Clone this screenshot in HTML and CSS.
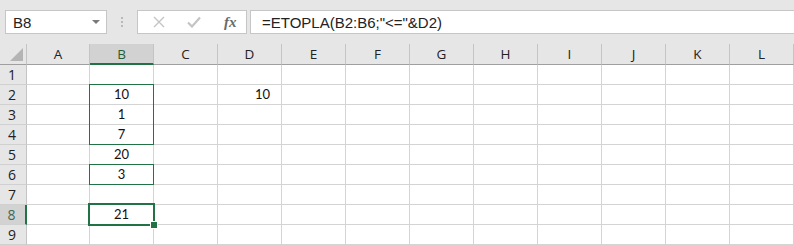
FILE: index.html
```html
<!DOCTYPE html>
<html lang="en">
<head>
  <meta charset="UTF-8" />
  <title>ETOPLA</title>
  <link rel="stylesheet" href="styles.css">
</head>
<body>

  <div class="toolbar">
    <div class="namebox">
      <span>B8</span>
      <span class="caret"></span>
    </div>
    <div class="grip"><i></i><i></i><i></i></div>
    <div class="fx-buttons">
      <svg width="12" height="12" viewBox="0 0 12 12"><path d="M1 1 L11 11 M11 1 L1 11" stroke="#c4c4c4" stroke-width="1.4" fill="none"/></svg>
      <svg width="14" height="12" viewBox="0 0 14 12"><path d="M1 6.5 L5 10.5 L13 1.5" stroke="#c4c4c4" stroke-width="2.2" fill="none"/></svg>
      <span class="fx">fx</span>
    </div>
    <div class="formula">=ETOPLA(B2:B6;"&lt;="&amp;D2)</div>
  </div>

  <div class="sheet">
    <!-- header row -->
    <div class="hd corner"><span class="tri"></span></div>
    <div class="hd">A</div><div class="hd active">B</div><div class="hd">C</div><div class="hd">D</div>
    <div class="hd">E</div><div class="hd">F</div><div class="hd">G</div><div class="hd">H</div>
    <div class="hd">I</div><div class="hd">J</div><div class="hd">K</div><div class="hd">L</div>

    <div class="rh">1</div>
    <div class="c"></div><div class="c"></div><div class="c"></div><div class="c"></div><div class="c"></div><div class="c"></div>
    <div class="c"></div><div class="c"></div><div class="c"></div><div class="c"></div><div class="c"></div><div class="c"></div>

    <div class="rh">2</div>
    <div class="c"></div><div class="c mid">10<div class="range tall"></div></div><div class="c"></div><div class="c right">10</div><div class="c"></div><div class="c"></div>
    <div class="c"></div><div class="c"></div><div class="c"></div><div class="c"></div><div class="c"></div><div class="c"></div>

    <div class="rh">3</div>
    <div class="c"></div><div class="c mid">1</div><div class="c"></div><div class="c"></div><div class="c"></div><div class="c"></div>
    <div class="c"></div><div class="c"></div><div class="c"></div><div class="c"></div><div class="c"></div><div class="c"></div>

    <div class="rh">4</div>
    <div class="c"></div><div class="c mid">7</div><div class="c"></div><div class="c"></div><div class="c"></div><div class="c"></div>
    <div class="c"></div><div class="c"></div><div class="c"></div><div class="c"></div><div class="c"></div><div class="c"></div>

    <div class="rh">5</div>
    <div class="c"></div><div class="c mid">20</div><div class="c"></div><div class="c"></div><div class="c"></div><div class="c"></div>
    <div class="c"></div><div class="c"></div><div class="c"></div><div class="c"></div><div class="c"></div><div class="c"></div>

    <div class="rh">6</div>
    <div class="c"></div><div class="c mid">3<div class="range"></div></div><div class="c"></div><div class="c"></div><div class="c"></div><div class="c"></div>
    <div class="c"></div><div class="c"></div><div class="c"></div><div class="c"></div><div class="c"></div><div class="c"></div>

    <div class="rh">7</div>
    <div class="c"></div><div class="c"></div><div class="c"></div><div class="c"></div><div class="c"></div><div class="c"></div>
    <div class="c"></div><div class="c"></div><div class="c"></div><div class="c"></div><div class="c"></div><div class="c"></div>

    <div class="rh active">8</div>
    <div class="c"></div><div class="c mid">21<div class="cursor"><span class="handle"></span></div></div><div class="c"></div><div class="c"></div><div class="c"></div><div class="c"></div>
    <div class="c"></div><div class="c"></div><div class="c"></div><div class="c"></div><div class="c"></div><div class="c"></div>

    <div class="rh">9</div>
    <div class="c"></div><div class="c"></div><div class="c"></div><div class="c"></div><div class="c"></div><div class="c"></div>
    <div class="c"></div><div class="c"></div><div class="c"></div><div class="c"></div><div class="c"></div><div class="c"></div>
  </div>

</body>
</html>
```

FILE: styles.css
```css
* {
  box-sizing: border-box;
}

body {
  margin: 0;
  background: #e6e6e6;
  font-family: "Liberation Sans", Arial, sans-serif;
  overflow: hidden;
}

/* formula bar */
.toolbar {
  height: 44px;
  display: flex;
  align-items: flex-start;
  padding: 10px 0 0 5px;
}

.namebox {
  width: 102px;
  height: 24px;
  background: #fff;
  border: 1px solid #c6c6c6;
  display: flex;
  align-items: center;
  justify-content: space-between;
  padding: 0 6px 0 7px;
  font-size: 15px;
  color: #222;
}

.caret {
  width: 0;
  height: 0;
  border-left: 4px solid transparent;
  border-right: 4px solid transparent;
  border-top: 4px solid #7a7a7a;
}

.grip {
  width: 30px;
  height: 24px;
  display: flex;
  flex-direction: column;
  align-items: center;
  justify-content: center;
  gap: 2px;
}

.grip i {
  width: 2px;
  height: 2px;
  background: #b9b9b9;
}

.fx-buttons {
  width: 110px;
  height: 24px;
  background: #fff;
  border: 1px solid #c6c6c6;
  display: flex;
  align-items: center;
  padding-left: 15px;
}

.fx-buttons svg + svg {
  margin-left: 22px;
}

.fx {
  margin-left: 23px;
  font-family: "Liberation Serif", serif;
  font-style: italic;
  font-weight: bold;
  font-size: 15px;
  color: #6a6a6a;
}

.formula {
  flex: 1;
  height: 24px;
  margin-left: 3px;
  background: #fff;
  border: 1px solid #c6c6c6;
  border-right: none;
  padding: 3px 0 0 11px;
  font-size: 15px;
  color: #222;
}

/* grid */
.sheet {
  display: grid;
  grid-template-columns: 27px 63px repeat(11, 64px);
  grid-template-rows: 21px repeat(9, 20px);
  background: #fff;
}

.hd {
  background: #e6e6e6;
  border-right: 1px solid #c4c4c4;
  border-bottom: 1px solid #9f9f9f;
  font-family: "Open Sans", "Noto Sans", sans-serif;
  font-size: 13.5px;
  color: #222;
  display: flex;
  align-items: center;
  justify-content: center;
}

.hd.active {
  background: #d2d2d2;
  color: #1e5e3a;
  border-bottom: 2px solid #217346;
}

.corner {
  position: relative;
}

.tri {
  position: absolute;
  right: 3px;
  bottom: 3px;
  width: 0;
  height: 0;
  border-left: 13px solid transparent;
  border-bottom: 13px solid #b4b4b4;
}

.rh {
  background: #e6e6e6;
  border-right: 1px solid #c4c4c4;
  border-bottom: 1px solid #d0d0d0;
  font-family: "Open Sans", "Noto Sans", sans-serif;
  font-size: 14px;
  color: #222;
  display: flex;
  align-items: center;
  justify-content: center;
  padding-right: 2px;
}

.rh.active {
  background: #d2d2d2;
  color: #3d6b52;
  border-right: 2px solid #217346;
}

.c {
  position: relative;
  border-right: 1px solid #d4d4d4;
  border-bottom: 1px solid #d4d4d4;
  font-family: Lato, "Liberation Sans", sans-serif;
  font-size: 13px;
  color: #111;
  line-height: 19px;
}

.c.mid {
  text-align: center;
}

.c.right {
  text-align: right;
  padding-right: 11px;
}

/* selection overlays */
.range {
  position: absolute;
  z-index: 1;
  left: -1px;
  top: -1px;
  width: 65px;
  height: 21px;
  border: 1px solid #217346;
}

.range.tall {
  height: 61px;
}

.cursor {
  position: absolute;
  z-index: 1;
  left: -2px;
  top: -2px;
  width: 67px;
  height: 23px;
  border: 2px solid #217346;
}

.handle {
  position: absolute;
  right: -4px;
  bottom: -4px;
  width: 6px;
  height: 6px;
  background: #217346;
  outline: 1px solid #fff;
}
```
